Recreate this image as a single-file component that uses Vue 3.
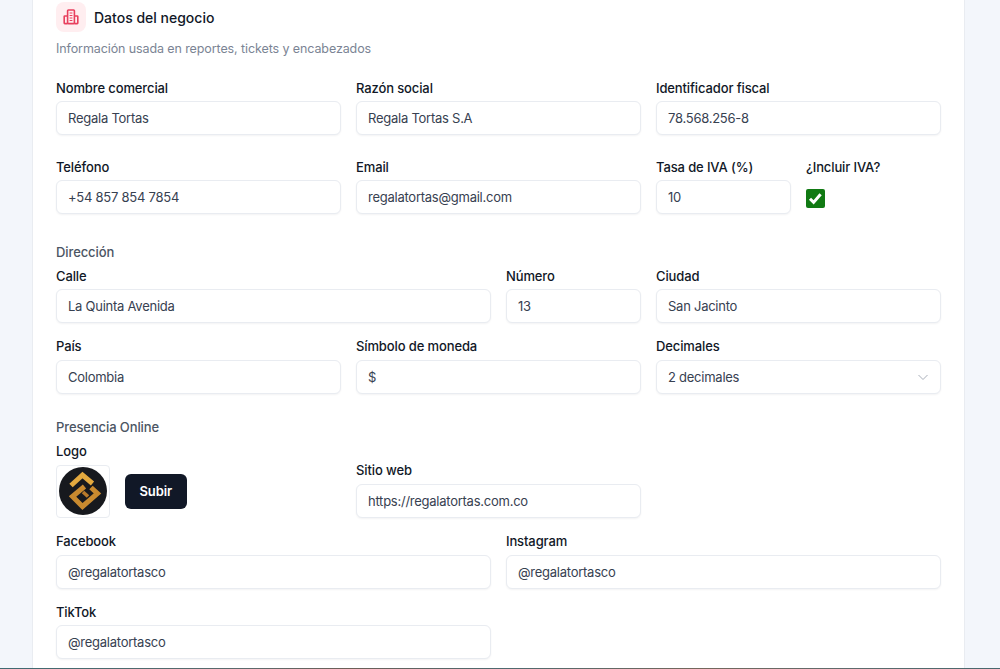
<template>
  <div class="page">
    <section class="card">
      <header class="head">
        <span class="head-icon">
          <svg width="16" height="16" viewBox="0 0 16 16" fill="none" stroke="#e8405e" stroke-width="1.6">
            <rect x="4.6" y="1" width="6.8" height="13.6" rx="0.8" />
            <path d="M4.6 7H1.8a.6.6 0 0 0-.6.6v6.4a.6.6 0 0 0 .6.6h2.8M11.4 7h2.8a.6.6 0 0 1 .6.6v6.4a.6.6 0 0 1-.6.6h-2.8" />
            <path d="M6.6 4h2.8M6.6 6.5h2.8M6.6 9h2.8M6.6 11.5h2.8" stroke-width="1.1" />
          </svg>
        </span>
        <h2>Datos del negocio</h2>
      </header>
      <p class="sub">Información usada en reportes, tickets y encabezados</p>

      <div class="grid row-general">
        <div class="field s2" v-for="f in general" :key="f.label">
          <label>{{ f.label }}</label>
          <input type="text" :value="f.value" />
        </div>
        <div class="field s1">
          <label>Tasa de IVA (%)</label>
          <input type="text" value="10" />
        </div>
        <div class="field s1">
          <label>¿Incluir IVA?</label>
          <span class="check">
            <svg width="15" height="15" viewBox="0 0 15 15" fill="none" stroke="#fff" stroke-width="3">
              <path d="M2 7.8l3.6 3.6 7-8.2" />
            </svg>
          </span>
        </div>
      </div>

      <div class="section-title address">Dirección</div>
      <div class="grid">
        <div class="field s3">
          <label>Calle</label>
          <input type="text" value="La Quinta Avenida" />
        </div>
        <div class="field s1">
          <label>Número</label>
          <input type="text" value="13" />
        </div>
        <div class="field s2">
          <label>Ciudad</label>
          <input type="text" value="San Jacinto" />
        </div>
        <div class="field s2">
          <label>País</label>
          <input type="text" value="Colombia" />
        </div>
        <div class="field s2">
          <label>Símbolo de moneda</label>
          <input type="text" value="$" />
        </div>
        <div class="field s2">
          <label>Decimales</label>
          <div class="select">
            <span>2 decimales</span>
            <svg width="12" height="12" viewBox="0 0 12 12" fill="none" stroke="#a9afba" stroke-width="1">
              <path d="M1.5 4l4.5 4.5L10.5 4" />
            </svg>
          </div>
        </div>
      </div>

      <div class="section-title online">Presencia Online</div>
      <div class="grid">
        <div class="field s2">
          <label>Logo</label>
          <div class="logo-row">
            <span class="logo">
              <svg width="48" height="48" viewBox="0 0 48 48">
                <circle cx="24" cy="24" r="24" fill="#17191e" />
                <g fill="none" stroke-width="5">
                  <path d="M12 18.5L23.5 8L33.5 16.5" stroke="#e3a93f" />
                  <path d="M25.5 19.5L13.5 29.5L23.5 39.5L38.5 26.5L32 20.5" stroke="#c98a2f" />
                  <path d="M24 25L29 29.5" stroke-width="3.6" stroke="#b97a2b" />
                </g>
              </svg>
            </span>
            <button type="button" class="upload">Subir</button>
          </div>
        </div>
        <div class="field s2 web">
          <label>Sitio web</label>
          <input type="text" value="https://regalatortas.com.co" />
        </div>
        <div class="field s3">
          <label>Facebook</label>
          <input type="text" value="@regalatortasco" />
        </div>
        <div class="field s3">
          <label>Instagram</label>
          <input type="text" value="@regalatortasco" />
        </div>
        <div class="field s3">
          <label>TikTok</label>
          <input type="text" value="@regalatortasco" />
        </div>
      </div>
    </section>
    <div class="edge"></div>
  </div>
</template>

<script setup>
const general = [
  { label: 'Nombre comercial', value: 'Regala Tortas' },
  { label: 'Razón social', value: 'Regala Tortas S.A' },
  { label: 'Identificador fiscal', value: '78.568.256-8' },
  { label: 'Teléfono', value: '+54 857 854 7854' },
  { label: 'Email', value: 'regalatortas@gmail.com' },
]
</script>

<style>
html,
body {
  margin: 0;
  overflow: hidden;
}
</style>

<style scoped>
.page {
  height: 669px;
  overflow: hidden;
  position: relative;
  background: #f3f6fb;
  padding-left: 32px;
  box-sizing: border-box;
  font-family: Inter, "Noto Sans", sans-serif;
  color: #111827;
}
.card {
  width: 933px;
  height: 669px;
  box-sizing: border-box;
  background: #fff;
  border-left: 1px solid #e9ecf1;
  border-right: 1px solid #e9ecf1;
  padding: 2px 23px 0;
}
.head {
  display: flex;
  align-items: flex-start;
  gap: 8px;
}
.head-icon {
  width: 30px;
  height: 30px;
  border-radius: 8px;
  background: #ffeef0;
  display: flex;
  align-items: center;
  justify-content: center;
}
h2 {
  margin: 0;
  font-size: 14px;
  font-weight: 500;
  line-height: 32px;
}
.sub {
  margin: 5px 0 0;
  font-size: 12.5px;
  letter-spacing: -0.1px;
  line-height: 20px;
  color: #7b8494;
}
.grid {
  display: grid;
  grid-template-columns: repeat(6, 135px);
  column-gap: 15px;
  row-gap: 13px;
}
.row-general {
  margin-top: 18.5px;
  row-gap: 21.5px;
}
.s1 { grid-column: span 1; }
.s2 { grid-column: span 2; }
.s3 { grid-column: span 3; }
.field {
  display: flex;
  flex-direction: column;
  min-width: 0;
}
label {
  font-size: 13px;
  font-weight: 500;
  letter-spacing: -0.12px;
  line-height: 20px;
  margin-bottom: 3.5px;
  color: #111827;
}
input,
.select {
  height: 34px;
  box-sizing: border-box;
  width: 100%;
  border: 1px solid #e9ecf1;
  border-radius: 6px;
  padding: 0 11px;
  background: #fff;
  font-family: inherit;
  font-size: 13px;
  letter-spacing: -0.25px;
  color: #374151;
  box-shadow: 0 1px 2px rgba(17, 24, 39, 0.05);
  outline: none;
}
.select {
  display: flex;
  align-items: center;
  justify-content: space-between;
}
.check {
  width: 19px;
  height: 19px;
  margin-top: 9px;
  border-radius: 2px;
  background: #117a13;
  display: flex;
  align-items: center;
  justify-content: center;
}
.section-title {
  font-size: 13px;
  font-weight: 500;
  letter-spacing: -0.1px;
  line-height: 20px;
  color: #4b5563;
}
.address {
  margin-top: 28px;
  margin-bottom: 3.5px;
}
.online {
  margin-top: 23.5px;
  margin-bottom: 4px;
}
.logo-row {
  display: flex;
  align-items: center;
  gap: 15px;
  margin-bottom: 0.5px;
}
.logo {
  width: 54px;
  height: 53px;
  box-sizing: border-box;
  border: 1px solid #e9ecf1;
  border-radius: 4px;
  display: flex;
  align-items: center;
  justify-content: center;
}
.upload {
  height: 35px;
  padding: 0 14.5px;
  border: 0;
  border-radius: 6px;
  background: #111827;
  color: #fff;
  font-family: inherit;
  font-size: 13px;
  font-weight: 600;
  letter-spacing: -0.1px;
}
.web {
  justify-content: flex-end;
  padding-bottom: 0.5px;
}
.edge {
  position: absolute;
  left: 0;
  right: 0;
  bottom: 0;
  height: 1px;
  background: linear-gradient(90deg, #3f6a72 0, #5d6a6c 25%, #6d5f58 35%, #4e6a70 50%, #75675d 70%, #5f6b6d 85%, #48686e 100%);
}
</style>
